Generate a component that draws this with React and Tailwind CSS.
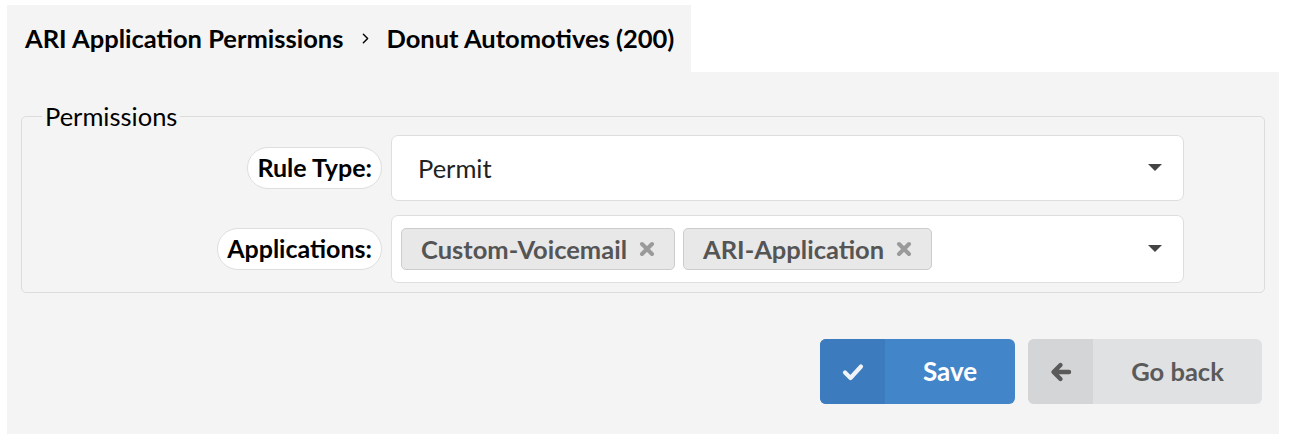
import { ChevronRight } from "lucide-react";

function Caret() {
  return (
    <svg width="14" height="8" viewBox="0 0 14 8" className="shrink-0">
      <path d="M0 0 H14 L7 7 Z" fill="#444" />
    </svg>
  );
}

function XIcon() {
  return (
    <svg width="16" height="16" viewBox="0 0 16 16" className="shrink-0">
      <path d="M3 3 L13 13 M13 3 L3 13" stroke="#9a9a9a" strokeWidth="4" strokeLinecap="round" />
    </svg>
  );
}

function Tag({ label }) {
  return (
    <div className="flex items-center h-[42px] pl-[19px] pr-[19px] gap-[12px] bg-[#e8e8e8] border border-[#cccccc] rounded-[5px] text-[#555] font-bold text-[25.5px]">
      <span>{label}</span>
      <XIcon />
    </div>
  );
}

function FieldLabel({ children }) {
  return (
    <div className="w-[369px] flex justify-end pr-[9px]">
      <span className="bg-white border border-[#dedede] rounded-full px-[9px] h-[42px] flex items-center font-bold text-[25px] text-black">
        {children}
      </span>
    </div>
  );
}

export default function App() {
  return (
    <div className="bg-white w-[1292px] h-[446px] pt-[5px] pl-[7px]" style={{ fontFamily: "Lato, 'Open Sans', sans-serif" }}>
      <div className="w-[684px] h-[67px] bg-[#f4f4f4] flex items-center pl-[18px] text-[25.5px] font-bold text-black">
        <span>ARI Application Permissions</span>
        <ChevronRight size={17} strokeWidth={2} className="ml-[14px] mr-[12px] text-black" />
        <span>Donut Automotives (200)</span>
      </div>
      <div className="w-[1272px] h-[362px] bg-[#f4f4f4] pt-[29px] px-[14px]">
        <fieldset className="border border-[#dcdcdc] rounded-[5px] pl-[20px] pb-[9px] min-w-0">
          <legend className="px-[3px] text-[25.5px] text-black leading-[30px]">Permissions</legend>
          <div className="flex flex-col gap-[14px] -ml-[20px] mt-[4px]">
            <div className="flex items-center">
              <FieldLabel>Rule Type:</FieldLabel>
              <div className="w-[793px] h-[66px] bg-white border border-[#dedede] rounded-[7px] flex items-center justify-between pl-[26px] pr-[21px] text-[25.5px] text-[#222]">
                <span>Permit</span>
                <Caret />
              </div>
            </div>
            <div className="flex items-center">
              <FieldLabel>Applications:</FieldLabel>
              <div className="w-[793px] h-[68px] bg-white border border-[#dedede] rounded-[7px] flex items-center justify-between pl-[9px] pr-[21px]">
                <div className="flex gap-[8px]">
                  <Tag label="Custom-Voicemail" />
                  <Tag label="ARI-Application" />
                </div>
                <Caret />
              </div>
            </div>
          </div>
        </fieldset>
        <div className="flex justify-end gap-[13px] mt-[46px] pr-[3px]">
          <button className="flex h-[65px] w-[195px] rounded-[6px] overflow-hidden bg-[#4285c9] text-white font-bold text-[26px]">
            <span className="w-[65px] h-full bg-[#3b7bbe] flex items-center justify-center">
              <svg width="22" height="18" viewBox="0 0 22 18">
                <path d="M3 9.5 L8.5 15 L19 3.5" fill="none" stroke="#f0f4f8" strokeWidth="4.2" strokeLinecap="round" strokeLinejoin="round" />
              </svg>
            </span>
            <span className="flex-1 flex items-center justify-center">Save</span>
          </button>
          <button className="flex h-[65px] w-[234px] rounded-[6px] overflow-hidden bg-[#e0e1e2] text-[#5a5a5a] font-bold text-[25.5px]">
            <span className="w-[65px] h-full bg-[#d4d5d6] flex items-center justify-center">
              <svg width="22" height="22" viewBox="0 0 22 22">
                <path d="M19 11 H4 M10.5 4 L3.5 11 L10.5 18" fill="none" stroke="#5a5a5a" strokeWidth="4.4" strokeLinecap="round" strokeLinejoin="round" />
              </svg>
            </span>
            <span className="flex-1 flex items-center justify-center">Go back</span>
          </button>
        </div>
      </div>
    </div>
  );
}
